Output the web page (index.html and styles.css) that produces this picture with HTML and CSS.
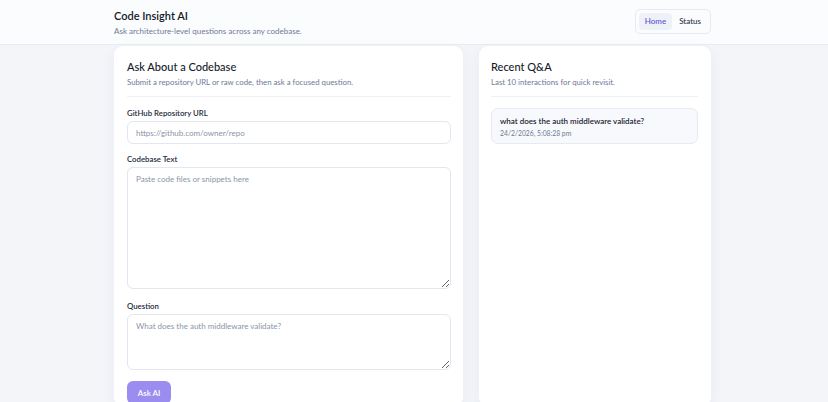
FILE: index.html
```html
<!DOCTYPE html>
<html>
<head>
<meta charset="utf-8">
<link rel="stylesheet" href="styles.css">
</head>
<body>
<header class="topbar">
  <div class="wrap topbar-inner">
    <div class="brand">
      <h1 class="brand-title">Code Insight AI</h1>
      <p class="brand-sub">Ask architecture-level questions across any codebase.</p>
    </div>
    <nav class="nav">
      <a class="nav-link active">Home</a>
      <a class="nav-link">Status</a>
    </nav>
  </div>
</header>
<main class="wrap grid">
  <section class="card">
    <h2 class="card-title">Ask About a Codebase</h2>
    <p class="card-sub">Submit a repository URL or raw code, then ask a focused question.</p>
    <div class="divider"></div>
    <label class="label">GitHub Repository URL</label>
    <input class="input" placeholder="https://github.com/owner/repo">
    <label class="label">Codebase Text</label>
    <textarea class="input area-big" placeholder="Paste code files or snippets here"></textarea>
    <label class="label">Question</label>
    <textarea class="input area-small" placeholder="What does the auth middleware validate?"></textarea>
    <button class="btn">Ask AI</button>
  </section>
  <section class="card">
    <h2 class="card-title">Recent Q&amp;A</h2>
    <p class="card-sub">Last 10 interactions for quick revisit.</p>
    <div class="divider"></div>
    <div class="item">
      <div class="item-q">what does the auth middleware validate?</div>
      <div class="item-t">24/2/2026, 5:08:28 pm</div>
    </div>
  </section>
</main>
</body>
</html>
```
FILE: styles.css
```css
* { box-sizing: border-box; }
html, body { margin: 0; padding: 0; }
body {
  font-family: "Lato", "Noto Sans", sans-serif;
  background: #f3f5f9;
  color: #1b2333;
  height: 402px;
  overflow: hidden;
}
.wrap { width: 597px; margin-left: 114px; }
.topbar {
  background: #fbfcfe;
  border-bottom: 1px solid #e9edf3;
  height: 45px;
}
.topbar-inner {
  display: flex;
  justify-content: space-between;
  align-items: flex-start;
}
.brand-title {
  margin: 9px 0 0;
  font-size: 11px;
  font-weight: 600;
  line-height: 14px;
  color: #131a29;
}
.brand-sub {
  margin: 3px 0 0;
  font-size: 8px;
  line-height: 10px;
  color: #6d7a94;
}
.nav {
  margin-top: 9px;
  display: flex;
  gap: 1px;
  padding: 3px;
  height: 25px;
  border: 1px solid #e6eaf1;
  border-radius: 5px;
  background: #fbfcfe;
}
.nav-link {
  font-size: 8px;
  line-height: 17px;
  padding: 0 6px;
  border-radius: 4px;
  color: #2a3345;
  font-weight: 500;
}
.nav-link.active {
  background: #eef1f7;
  color: #5a4fd4;
}
.grid {
  display: grid;
  grid-template-columns: 349px 232px;
  gap: 16px;
  margin-top: 1px;
}
.card {
  background: #fff;
  border-radius: 9px;
  padding: 14px 12px 0 13px;
  height: 360px;
  box-shadow: 0 0 0 1px #eef1f6, 0 4px 14px rgba(30, 45, 80, 0.06);
  display: flex;
  flex-direction: column;
}
.card + .card { padding-left: 12px; padding-right: 13px; }
.card-title {
  margin: 0;
  font-size: 11px;
  line-height: 14px;
  font-weight: 500;
  color: #141b2a;
}
.card-sub {
  margin: 3px 0 0;
  font-size: 7.8px;
  line-height: 10px;
  color: #6d7a94;
}
.divider {
  height: 1px;
  background: #eef1f5;
  margin: 9px 0 11px;
}
.label {
  font-size: 7.8px;
  font-weight: 600;
  line-height: 10px;
  color: #222a3b;
  margin-bottom: 3px;
}
.input {
  display: block;
  width: 100%;
  border: 1px solid #e2e7ef;
  border-radius: 6px;
  background: #fff;
  font-family: inherit;
  font-size: 8px;
  padding: 0 8px;
  height: 23px;
  margin: 0 0 10px;
  color: #1b2333;
}
.input::placeholder { color: #8a94a8; }
textarea.input { resize: vertical; padding-top: 6px; line-height: 10px; }
.area-big { height: 122px; margin-bottom: 12px; }
.area-small { height: 56px; margin-bottom: 11px; }
.btn {
  align-self: flex-start;
  border: none;
  border-radius: 6px;
  background: #9b8cf0;
  color: #fff;
  font-family: inherit;
  font-size: 8px;
  font-weight: 600;
  width: 44px;
  height: 23px;
  padding: 0;
}
.item {
  border: 1px solid #e6eaf1;
  background: #f8f9fc;
  border-radius: 7px;
  padding: 7px 8px;
  height: 36px;
}
.item-q {
  font-size: 8px;
  font-weight: 600;
  line-height: 11px;
  color: #1a2232;
}
.item-t {
  font-size: 6.8px;
  line-height: 9px;
  margin-top: 2px;
  color: #6d7a94;
}
```
